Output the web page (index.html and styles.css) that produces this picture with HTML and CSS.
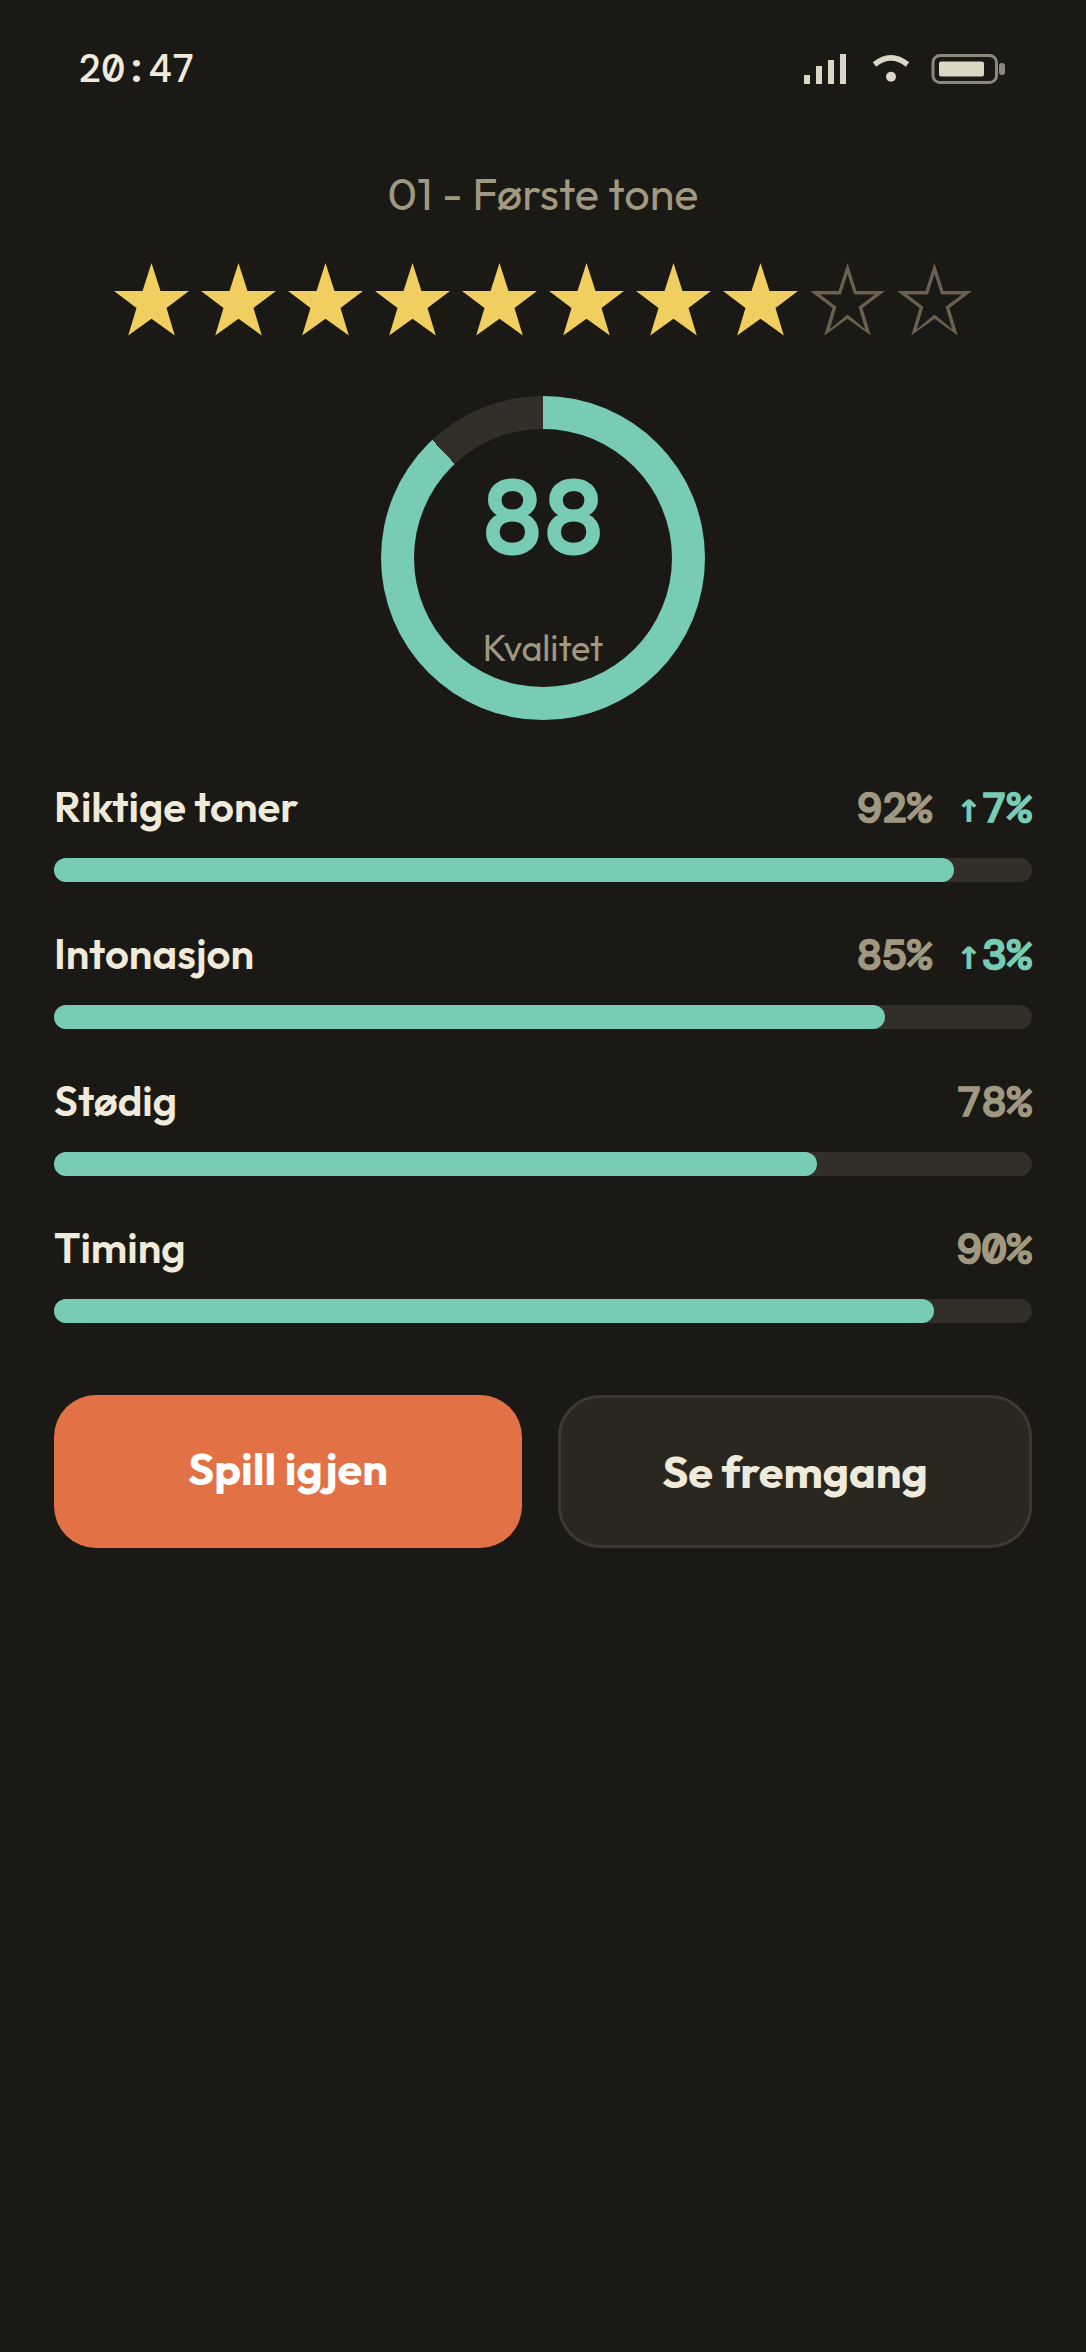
FILE: index.html
```html
<!DOCTYPE html>
<html lang="no">
<head>
<meta charset="UTF-8">
<meta name="viewport" content="width=device-width, initial-scale=1.0">
<title>Resultat</title>
<link rel="stylesheet" href="styles.css">
</head>
<body>

<svg class="symbols" aria-hidden="true">
  <symbol id="star" viewBox="0.5 0 78 78">
    <path d="M39 0L48 28H76.500L54 45L62.300 72.500L39 55.700L15.700 72.500L24 45L1.500 28H30Z"/>
  </symbol>
  <symbol id="star-empty" viewBox="0.5 0 78 78">
    <path fill-rule="evenodd" d="M39 0L48 28H76.500L54 45L62.300 72.500L39 55.700L15.700 72.500L24 45L1.500 28H30Z M39 11L32.400 31.400H11.600L27.900 43.700L21.300 66.200L39 51.500L56.700 66.200L50.100 43.700L66.400 31.400H45.600Z"/>
  </symbol>
</svg>

<header class="status-bar">
  <time class="clock">20:47</time>
  <div class="status-icons">
    <svg width="42" height="30" viewBox="0 0 42 30" aria-label="Signal">
      <path fill="#dcd6c6" d="M0 21h6v9H0zM12 12h6v18h-6zM24 6h6v24h-6zM36 0h6v30h-6z"/>
    </svg>
    <svg width="45" height="30" viewBox="0 0 45 30" aria-label="Wi-Fi">
      <path fill="none" stroke="#dcd6c6" stroke-width="5.5" d="M8.500 10.500Q25 -2.800 41.500 10.500"/>
      <circle fill="#dcd6c6" cx="25" cy="22.700" r="5"/>
    </svg>
    <svg width="74" height="30" viewBox="0 0 74 30" aria-label="Batteri">
      <rect fill="none" stroke="#8d887c" stroke-width="3" x="2" y="1.500" width="63.500" height="27" rx="7"/>
      <rect fill="#dcd6c6" x="8" y="7.500" width="45" height="15" rx="2"/>
      <rect fill="#8d887c" x="68" y="9" width="6" height="12" rx="3"/>
    </svg>
  </div>
</header>

<main class="result">
  <h1 class="title">01 - Første tone</h1>

  <div class="stars" role="img" aria-label="8 av 10 stjerner">
    <svg class="star"><use href="#star"/></svg>
    <svg class="star"><use href="#star"/></svg>
    <svg class="star"><use href="#star"/></svg>
    <svg class="star"><use href="#star"/></svg>
    <svg class="star"><use href="#star"/></svg>
    <svg class="star"><use href="#star"/></svg>
    <svg class="star"><use href="#star"/></svg>
    <svg class="star"><use href="#star"/></svg>
    <svg class="star empty"><use href="#star-empty"/></svg>
    <svg class="star empty"><use href="#star-empty"/></svg>
  </div>

  <div class="ring" style="--score: 88%">
    <div class="ring-inner">
      <span class="score">88</span>
      <span class="score-label">Kvalitet</span>
    </div>
  </div>

  <section class="metrics">
    <div class="metric">
      <div class="metric-head">
        <span class="metric-name">Riktige toner</span>
        <span class="metric-value">92%</span>
        <span class="metric-delta"><span class="arrow">↑</span>7%</span>
      </div>
      <div class="track"><div class="fill" style="width: 92%"></div></div>
    </div>
    <div class="metric">
      <div class="metric-head">
        <span class="metric-name">Intonasjon</span>
        <span class="metric-value">85%</span>
        <span class="metric-delta"><span class="arrow">↑</span>3%</span>
      </div>
      <div class="track"><div class="fill" style="width: 85%"></div></div>
    </div>
    <div class="metric">
      <div class="metric-head">
        <span class="metric-name">Stødig</span>
        <span class="metric-value">78%</span>
      </div>
      <div class="track"><div class="fill" style="width: 78%"></div></div>
    </div>
    <div class="metric">
      <div class="metric-head">
        <span class="metric-name">Timing</span>
        <span class="metric-value">90%</span>
      </div>
      <div class="track"><div class="fill" style="width: 90%"></div></div>
    </div>
  </section>

  <div class="actions">
    <button type="button" class="btn btn-primary">Spill igjen</button>
    <button type="button" class="btn btn-secondary">Se fremgang</button>
  </div>
</main>

</body>
</html>
```
FILE: styles.css
```css
:root {
  --bg: #1a1915;
  --text: #f0eada;
  --muted: #a09880;
  --teal: #78cbb4;
  --track: #322e28;
  --sans: Outfit, Lato, sans-serif;
  --mono: "DM Mono", "DejaVu Sans Mono", monospace;
}

* {
  box-sizing: border-box;
}

body {
  margin: 0;
  min-height: 100vh;
  background: var(--bg);
  color: var(--text);
  font-family: var(--sans);
}

.symbols {
  display: none;
}

/* --- Status bar --- */
.status-bar {
  display: flex;
  justify-content: space-between;
  align-items: center;
  height: 138px;
  padding: 0 81px 0 78px;
}

.clock {
  font-family: var(--mono);
  font-size: 39px;
  font-weight: 500;
  line-height: 48px;
}

.status-icons {
  display: flex;
  gap: 20px;
}

/* --- Result --- */
.result {
  display: flex;
  flex-direction: column;
  padding: 29px 54px;
}

.title {
  margin: 0;
  font-size: 45px;
  font-weight: 400;
  line-height: 54px;
  text-align: center;
  color: var(--muted);
}

.stars {
  display: flex;
  justify-content: center;
  gap: 9px;
  margin-top: 42px;
}

.star {
  width: 78px;
  height: 78px;
  fill: #f0cf60;
}

.star.empty {
  fill: #6b5f50;
}

/* --- Score ring --- */
.ring {
  align-self: center;
  width: 324px;
  height: 324px;
  margin-top: 55px;
  padding: 33px;
  border-radius: 50%;
  background: conic-gradient(var(--teal) var(--score), var(--track) 0);
}

.ring-inner {
  display: flex;
  flex-direction: column;
  align-items: center;
  height: 100%;
  padding-top: 15px;
  border-radius: 50%;
  background: var(--bg);
}

.score {
  font-family: var(--mono);
  font-size: 102px;
  font-weight: 700;
  line-height: 150px;
  color: var(--teal);
  -webkit-text-stroke: 3px var(--teal);
}

.score-label {
  font-size: 36px;
  line-height: 48px;
  margin-top: 30px;
  color: var(--muted);
}

/* --- Metrics --- */
.metrics {
  display: flex;
  flex-direction: column;
  gap: 45px;
  margin-top: 60px;
}

.metric-head {
  display: flex;
  align-items: baseline;
  gap: 24px;
  height: 54px;
  margin-bottom: 24px;
  font-size: 42px;
  line-height: 54px;
}

.metric-name {
  flex: 1;
  font-weight: 600;
}

/* DM Mono stops at medium, the stroke thickens it to bold */
.metric-value,
.metric-delta {
  font-family: var(--mono);
  font-weight: 700;
  -webkit-text-stroke: 0.04em currentColor;
}

.metric-value {
  color: var(--muted);
}

.metric-delta {
  color: var(--teal);
}

.arrow {
  font-family: "DejaVu Sans Mono", monospace;
  -webkit-text-stroke: 0;
}

.track {
  height: 24px;
  border-radius: 12px;
  background: var(--track);
}

.fill {
  height: 100%;
  border-radius: 12px;
  background: var(--teal);
}

/* --- Buttons --- */
.actions {
  display: flex;
  gap: 36px;
  margin-top: 72px;
}

.btn {
  flex: 1;
  box-sizing: content-box;
  display: flex;
  justify-content: center;
  padding: 45px 0;
  border: none;
  border-radius: 42px;
  font-family: var(--sans);
  font-size: 45px;
  font-weight: 700;
  line-height: 57px;
  cursor: pointer;
}

.btn-primary {
  background: #e27246;
  color: #fff;
}

.btn-secondary {
  border: 3px solid #3e3830;
  background: #2a2721;
  color: var(--text);
}
```
